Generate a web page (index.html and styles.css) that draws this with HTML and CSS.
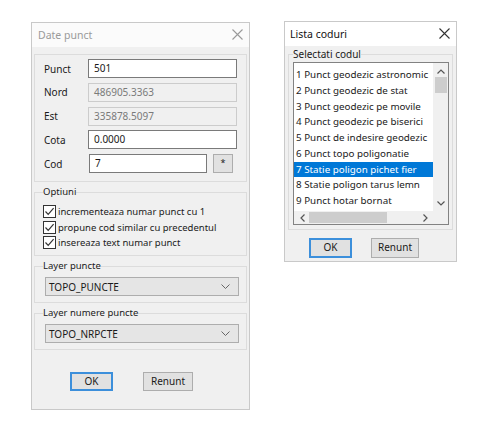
FILE: index.html
```
<!DOCTYPE html>
<html lang="ro">
<head>
    <meta charset="UTF-8">
    <meta name="viewport" content="width=device-width, initial-scale=1.0">
    <title>Date punct</title>
    <link rel="stylesheet" href="styles.css">
</head>
<body>
    <div class="window win-punct">
        <div class="titlebar inactive">
            <span>Date punct</span>
            <svg class="close" width="11" height="11" viewBox="0 0 11 11"><path d="M0.5 0.5 L10.5 10.5 M10.5 0.5 L0.5 10.5" stroke="#9a9a9a" stroke-width="1.1"/></svg>
        </div>
        <div class="body">
            <div class="group coords">
                <div class="row"><label>Punct</label><div class="input">501</div></div>
                <div class="row"><label>Nord</label><div class="input disabled">486905.3363</div></div>
                <div class="row"><label>Est</label><div class="input disabled">335878.5097</div></div>
                <div class="row"><label>Cota</label><div class="input">0.0000</div></div>
                <div class="row"><label>Cod</label><div class="input cod">7</div><div class="btn star">*</div></div>
            </div>

            <fieldset class="options">
                <legend>Optiuni</legend>
                <div class="check"><span class="box"><svg width="11" height="11" viewBox="0 0 11 11"><path d="M1.5 5.5 L4.2 8.3 L9.6 2.2" fill="none" stroke="#333" stroke-width="1.2"/></svg></span>incrementeaza numar punct cu 1</div>
                <div class="check"><span class="box"><svg width="11" height="11" viewBox="0 0 11 11"><path d="M1.5 5.5 L4.2 8.3 L9.6 2.2" fill="none" stroke="#333" stroke-width="1.2"/></svg></span>propune cod similar cu precedentul</div>
                <div class="check"><span class="box"><svg width="11" height="11" viewBox="0 0 11 11"><path d="M1.5 5.5 L4.2 8.3 L9.6 2.2" fill="none" stroke="#333" stroke-width="1.2"/></svg></span>insereaza text numar punct</div>
            </fieldset>

            <fieldset class="layer">
                <legend>Layer puncte</legend>
                <div class="select">TOPO_PUNCTE<svg width="9" height="5" viewBox="0 0 9 5"><path d="M0.5 0.5 L4.5 4.5 L8.5 0.5" fill="none" stroke="#666" stroke-width="1"/></svg></div>
            </fieldset>

            <fieldset class="layer">
                <legend>Layer numere puncte</legend>
                <div class="select">TOPO_NRPCTE<svg width="9" height="5" viewBox="0 0 9 5"><path d="M0.5 0.5 L4.5 4.5 L8.5 0.5" fill="none" stroke="#666" stroke-width="1"/></svg></div>
            </fieldset>

            <div class="buttons">
                <div class="btn default ok">OK</div>
                <div class="btn renunt">Renunt</div>
            </div>
        </div>
    </div>

    <div class="window win-coduri">
        <div class="titlebar">
            <span>Lista coduri</span>
            <svg class="close" width="11" height="11" viewBox="0 0 11 11"><path d="M0.5 0.5 L10.5 10.5 M10.5 0.5 L0.5 10.5" stroke="#333" stroke-width="1.1"/></svg>
        </div>
        <div class="body">
            <fieldset class="codes">
                <legend>Selectati codul</legend>
                <div class="listbox">
                    <div class="list-main">
                        <ul class="items">
                            <li>1 Punct geodezic astronomic</li>
                            <li>2 Punct geodezic de stat</li>
                            <li>3 Punct geodezic pe movile</li>
                            <li>4 Punct geodezic pe biserici</li>
                            <li>5 Punct de indesire geodezic</li>
                            <li>6 Punct topo poligonatie</li>
                            <li class="selected">7 Statie poligon pichet fier</li>
                            <li>8 Statie poligon tarus lemn</li>
                            <li>9 Punct hotar bornat</li>
                        </ul>
                        <div class="vscroll">
                            <svg width="8" height="5" viewBox="0 0 8 5"><path d="M0.5 4.5 L4 1 L7.5 4.5" fill="none" stroke="#555" stroke-width="1.2"/></svg>
                            <div class="vthumb"></div>
                            <div class="spacer"></div>
                            <svg width="8" height="5" viewBox="0 0 8 5"><path d="M0.5 0.5 L4 4 L7.5 0.5" fill="none" stroke="#555" stroke-width="1.2"/></svg>
                        </div>
                    </div>
                    <div class="hscroll">
                        <svg width="5" height="8" viewBox="0 0 5 8"><path d="M4.5 0.5 L1 4 L4.5 7.5" fill="none" stroke="#555" stroke-width="1.2"/></svg>
                        <div class="hthumb"></div>
                        <div class="spacer"></div>
                        <svg width="5" height="8" viewBox="0 0 5 8"><path d="M0.5 0.5 L4 4 L0.5 7.5" fill="none" stroke="#555" stroke-width="1.2"/></svg>
                        <div class="corner"></div>
                    </div>
                </div>
            </fieldset>
            <div class="buttons">
                <div class="btn default ok">OK</div>
                <div class="btn renunt">Renunt</div>
            </div>
        </div>
    </div>
</body>
</html>
```
FILE: styles.css
```
body {
    margin: 0;
    background: #ffffff;
    font-family: "Noto Sans", "Open Sans", sans-serif;
    font-size: 10px;
    color: #1a1a1a;
    display: flex;
    align-items: flex-start;
    padding: 21px 0 0 31px;
}

.window {
    background: #f0f0f0;
    border: 1px solid #c9c9c9;
    box-sizing: border-box;
    display: flex;
    flex-direction: column;
}

.win-punct {
    width: 219px;
    height: 388px;
    margin-top: 1px;
}

.win-coduri {
    width: 173px;
    height: 241px;
    margin-left: 34px;
}

.titlebar {
    height: 24px;
    background: #ffffff;
    display: flex;
    align-items: center;
    justify-content: space-between;
    padding: 0 6px 0 5px;
    font-size: 10.5px;
    color: #111;
    flex-shrink: 0;
}

.titlebar.inactive {
    background: #fbfbfb;
    color: #9a9a9a;
    padding-left: 6px;
}

.close {
    margin-top: -1px;
}

.win-punct .body {
    padding: 7px 2px 0 2px;
}

.group {
    border: 1px solid #dcdcdc;
    box-sizing: border-box;
    height: 128px;
    padding: 4px 9px 0 9px;
}

.row {
    display: flex;
    align-items: center;
    height: 19px;
    margin-bottom: 4.8px;
}

.row label {
    width: 44px;
    flex-shrink: 0;
    font-size: 10px;
}

.input {
    flex: 1;
    height: 19px;
    box-sizing: border-box;
    background: #fff;
    border: 1px solid #7a7a7a;
    padding: 0 0 0 5px;
    line-height: 17px;
    font-size: 10px;
}

.input.disabled {
    background: #f0f0f0;
    border-color: #cccccc;
    color: #7a7a7a;
}

.input.cod {
    flex: none;
    width: 118px;
    margin-left: 1px;
}

.btn {
    box-sizing: border-box;
    background: #e1e1e1;
    border: 1px solid #adadad;
    text-align: center;
    font-size: 10px;
}

.btn.star {
    width: 20px;
    height: 19px;
    margin-left: 6px;
    line-height: 15px;
    font-size: 9px;
}

.btn.default {
    border: 2px solid #3c8fdb;
}

fieldset {
    margin: 0;
    border: 1px solid #dcdcdc;
    box-sizing: border-box;
    min-width: 0;
}

legend {
    padding: 0;
    margin-left: 0;
    line-height: 14px;
    font-size: 9.5px;
}

.options {
    margin-top: 3px;
    height: 71px;
    padding: 5px 0 0 8px;
}

.check {
    display: flex;
    align-items: center;
    height: 15.5px;
    font-size: 9.5px;
}

.box {
    width: 13px;
    height: 13px;
    box-sizing: border-box;
    background: #fff;
    border: 1px solid #333;
    display: flex;
    align-items: center;
    justify-content: center;
    margin-right: 2px;
}

.layer {
    margin-top: 3px;
    height: 44px;
    padding: 4px 7px 0 10px;
}

.layer legend {
    margin-left: -2px;
}

.select {
    height: 19px;
    box-sizing: border-box;
    background: #e5e5e5;
    border: 1px solid #adadad;
    display: flex;
    align-items: center;
    justify-content: space-between;
    padding: 0 8px 0 3px;
    font-size: 10px;
}

.buttons {
    display: flex;
    gap: 30px;
    padding-left: 36px;
    margin-top: 22px;
}

.buttons .btn {
    height: 19px;
    line-height: 15px;
}

.buttons .btn.renunt {
    line-height: 17px;
}

.ok {
    width: 43px;
}

.renunt {
    width: 50px;
}

.win-coduri .body {
    padding: 1px 3px 0 3px;
}

.codes {
    height: 183px;
    padding: 1px 3px 0 4px;
}

.codes legend {
    font-size: 10px;
}

.listbox {
    height: 163px;
    box-sizing: border-box;
    background: #fff;
    border: 1px solid #828282;
    display: flex;
    flex-direction: column;
}

.list-main {
    flex: 1;
    display: flex;
    overflow: hidden;
}

.items {
    flex: 1;
    list-style: none;
    margin: 0;
    padding: 4px 0 0 0;
    overflow: hidden;
}

.items li {
    height: 15.75px;
    line-height: 15.75px;
    padding-left: 2px;
    white-space: nowrap;
    font-size: 9.8px;
}

.items li.selected {
    background: #0078d7;
    color: #fff;
}

.vscroll {
    width: 15px;
    background: #f0f0f0;
    display: flex;
    flex-direction: column;
    align-items: center;
    padding: 6px 0 5px 0;
    box-sizing: border-box;
}

.vthumb {
    width: 12px;
    height: 16px;
    background: #cdcdcd;
    margin-top: 3px;
}

.spacer {
    flex: 1;
}

.hscroll {
    height: 13px;
    background: #f0f0f0;
    display: flex;
    align-items: center;
    padding-left: 6px;
}

.hthumb {
    width: 78px;
    height: 11px;
    background: #cdcdcd;
    margin-left: 4px;
}

.corner {
    width: 15px;
    height: 13px;
    margin-left: 5px;
    background: #f0f0f0;
}

.win-coduri .buttons {
    padding-left: 21px;
    margin-top: 8px;
    gap: 19px;
}

.win-coduri .btn {
    height: 20px;
}

.win-coduri .renunt {
    width: 48px;
}
```
